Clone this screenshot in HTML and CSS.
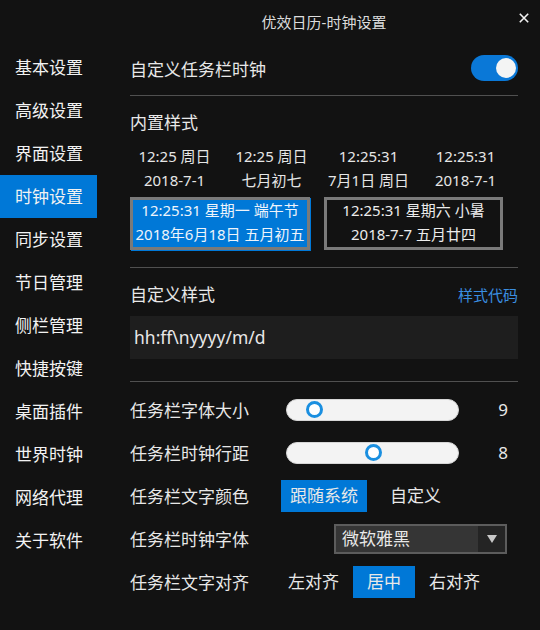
FILE: index.html
```html
<!DOCTYPE html>
<html lang="zh-CN">
<head>
<meta charset="utf-8">
<title>优效日历-时钟设置</title>
<link rel="stylesheet" href="styles.css">
</head>
<body>
<div class="window">
  <header class="titlebar">
    <div class="title">优效日历-时钟设置</div>
    <button class="close" aria-label="关闭">
      <svg width="10" height="10" viewBox="0 0 10 10"><path d="M0.8 0.8L9.2 9.2M9.2 0.8L0.8 9.2" stroke="#f2f2f2" stroke-width="1.6" fill="none"/></svg>
    </button>
  </header>
  <div class="body">
    <nav class="sidebar">
      <div class="nav-item">基本设置</div>
      <div class="nav-item">高级设置</div>
      <div class="nav-item">界面设置</div>
      <div class="nav-item active">时钟设置</div>
      <div class="nav-item">同步设置</div>
      <div class="nav-item">节日管理</div>
      <div class="nav-item">侧栏管理</div>
      <div class="nav-item">快捷按键</div>
      <div class="nav-item">桌面插件</div>
      <div class="nav-item">世界时钟</div>
      <div class="nav-item">网络代理</div>
      <div class="nav-item">关于软件</div>
    </nav>
    <main class="content">
      <div class="row-toggle">
        <span>自定义任务栏时钟</span>
        <span class="toggle"><span class="knob"></span></span>
      </div>
      <hr class="divider">
      <div class="section-title">内置样式</div>
      <div class="presets">
        <div class="preset"><div>12:25 周日</div><div>2018-7-1</div></div>
        <div class="preset"><div>12:25 周日</div><div>七月初七</div></div>
        <div class="preset"><div>12:25:31</div><div>7月1日 周日</div></div>
        <div class="preset"><div>12:25:31</div><div>2018-7-1</div></div>
      </div>
      <div class="boxes">
        <div class="style-box box-a selected"><div class="box-text"><div>12:25:31 星期一 端午节</div><div>2018年6月18日 五月初五</div></div></div>
        <div class="style-box box-b"><div class="box-text"><div>12:25:31 星期六 小暑</div><div>2018-7-7 五月廿四</div></div></div>
      </div>
      <hr class="divider divider-b">
      <div class="custom-head">
        <span>自定义样式</span>
        <span class="link">样式代码</span>
      </div>
      <div class="format-input">hh:ff\nyyyy/m/d</div>
      <hr class="divider divider-c">
      <div class="settings">
        <div class="setting-row">
          <span class="label">任务栏字体大小</span>
          <div class="slider"><span class="thumb" style="margin-left:19px"></span></div>
          <span class="value">9</span>
        </div>
        <div class="setting-row">
          <span class="label">任务栏时钟行距</span>
          <div class="slider"><span class="thumb" style="margin-left:78px"></span></div>
          <span class="value">8</span>
        </div>
        <div class="setting-row">
          <span class="label">任务栏文字颜色</span>
          <div class="choice-group color-group">
            <span class="choice on">跟随系统</span>
            <span class="choice">自定义</span>
          </div>
        </div>
        <div class="setting-row">
          <span class="label">任务栏时钟字体</span>
          <div class="dropdown">
            <span class="dropdown-text">微软雅黑</span>
            <span class="dropdown-arrow"><span class="tri"></span></span>
          </div>
        </div>
        <div class="setting-row">
          <span class="label">任务栏文字对齐</span>
          <div class="choice-group align-group">
            <span class="choice">左对齐</span>
            <span class="choice on">居中</span>
            <span class="choice">右对齐</span>
          </div>
        </div>
      </div>
    </main>
  </div>
</div>
</body>
</html>
```

FILE: styles.css
```css
html, body {
  margin: 0;
  padding: 0;
  background: #121212;
}
body {
  font-family: "Noto Sans", "Noto Sans CJK SC", sans-serif;
  color: #e8e8e8;
}
.window {
  width: 540px;
  height: 630px;
  overflow: hidden;
}
.titlebar {
  height: 46px;
  position: relative;
}
.title {
  padding: 10px 22px 0 130px;
  text-align: center;
  font-size: 15px;
  line-height: 24px;
  color: #dcdcdc;
}
.close {
  position: absolute;
  top: 13px;
  right: 11px;
  width: 10px;
  height: 10px;
  padding: 0;
  border: 0;
  background: none;
  display: block;
}
.close svg { display: block; }
.body {
  display: flex;
}
.sidebar {
  width: 97px;
  flex: none;
}
.nav-item {
  height: 43px;
  line-height: 43px;
  padding-left: 15px;
  font-size: 17px;
  color: #f2f2f2;
}
.nav-item.active {
  background: #0078d7;
}
.content {
  flex: 1;
  padding: 0 22px 0 33px;
}
.row-toggle {
  height: 44px;
  display: flex;
  align-items: center;
  justify-content: space-between;
  font-size: 17px;
}
.toggle {
  width: 47px;
  height: 26px;
  border-radius: 13px;
  background: #0a78d7;
  display: flex;
  justify-content: flex-end;
  align-items: center;
  padding: 0 2px;
  box-sizing: border-box;
}
.knob {
  width: 20px;
  height: 20px;
  border-radius: 50%;
  background: #f4f4f4;
}
.divider {
  margin: 5px 0 0;
  border: 0;
  height: 1px;
  background: #505050;
}
.section-title {
  margin-top: 15px;
  font-size: 17px;
  line-height: 24px;
}
.presets {
  margin: 9px 0 0 -4px;
  width: 388px;
  display: grid;
  grid-template-columns: repeat(4, 97px);
  font-size: 15px;
  line-height: 24px;
  text-align: center;
  color: #e6e6e6;
}
.boxes {
  margin-top: 5px;
  display: flex;
  gap: 14px;
}
.style-box {
  height: 53px;
  box-sizing: border-box;
  border: 3px solid #7a7a7a;
  font-size: 15px;
  line-height: 24px;
  text-align: center;
  color: #ececec;
}
.box-text {
  margin-top: -2px;
}
.style-box.selected {
  background: #0078d7;
  box-shadow: 1px 1px 0 #0078d7;
  color: #eef4fb;
}
.box-a { width: 180px; }
.box-b { width: 179px; }
.divider-b {
  margin-top: 17px;
}
.custom-head {
  margin-top: 15px;
  display: flex;
  justify-content: space-between;
  align-items: center;
  font-size: 17px;
  line-height: 24px;
}
.link {
  font-size: 15px;
  color: #3a8ee0;
}
.format-input {
  margin-top: 9px;
  height: 43px;
  background: #1e1e1e;
  padding-left: 4px;
  line-height: 43px;
  font-size: 17.5px;
}
.divider-c {
  margin-top: 22px;
}
.settings {
  margin-top: 6px;
}
.setting-row {
  height: 43px;
  display: flex;
  align-items: center;
  font-size: 17px;
}
.label {
  width: 144px;
  flex: none;
}
.slider {
  margin-left: 12px;
  width: 173px;
  height: 22px;
  box-sizing: border-box;
  border: 1px solid #d6d6d6;
  background: #f3f3f3;
  border-radius: 11px;
  display: flex;
  align-items: center;
}
.thumb {
  width: 17px;
  height: 17px;
  box-sizing: border-box;
  border: 3px solid #1a8fe0;
  border-radius: 50%;
  background: #ffffff;
}
.value {
  margin-left: auto;
  padding-right: 10px;
}
.choice-group {
  display: flex;
  height: 32px;
  align-items: center;
}
.choice {
  line-height: 32px;
  padding: 0 9px;
}
.choice.on {
  background: #0078d7;
}
.color-group {
  margin-left: 7px;
}
.color-group .choice + .choice {
  margin-left: 14px;
}
.align-group .choice {
  padding: 0 14px;
}
.dropdown {
  margin-left: 60px;
  width: 173px;
  height: 30px;
  box-sizing: border-box;
  border: 2px solid #5c5c5c;
  background: #353535;
  display: flex;
}
.dropdown-text {
  flex: 1;
  padding-left: 6px;
  line-height: 26px;
}
.dropdown-arrow {
  width: 27px;
  background: #242424;
  display: flex;
  align-items: center;
  justify-content: center;
}
.tri {
  width: 0;
  height: 0;
  border-left: 5px solid transparent;
  border-right: 5px solid transparent;
  border-top: 8px solid #c8c8c8;
}
```
